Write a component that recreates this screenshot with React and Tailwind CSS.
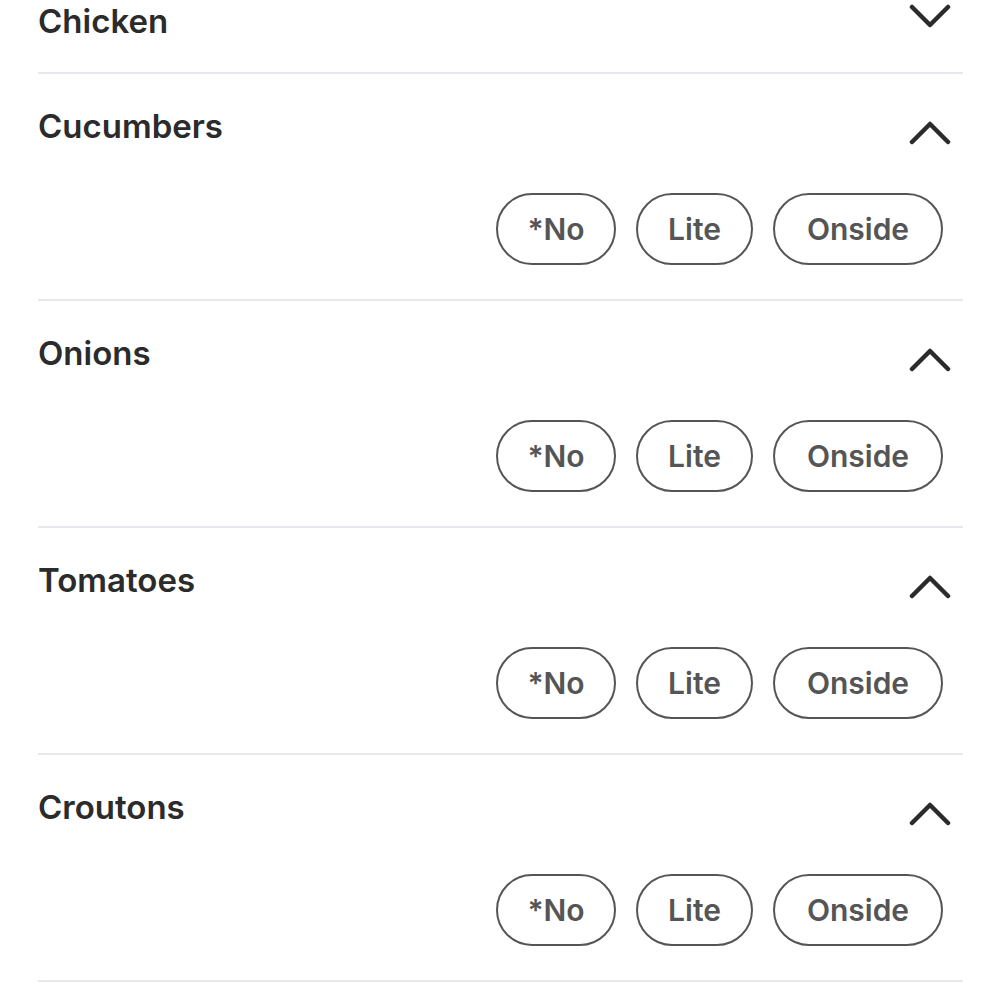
import React from 'react'

const sections = [
  { name: 'Chicken', open: false },
  { name: 'Cucumbers', open: true },
  { name: 'Onions', open: true },
  { name: 'Tomatoes', open: true },
  { name: 'Croutons', open: true },
]

const options = [
  { label: '*No', w: 'w-[120px]' },
  { label: 'Lite', w: 'w-[117px]' },
  { label: 'Onside', w: 'w-[170px]' },
]

function Chevron({ up }) {
  return (
    <svg width="42" height="24" viewBox="0 0 42 24" fill="none" className="text-[#2b2b2b]">
      <polyline
        points={up ? '3,21 21,3 39,21' : '3,3 21,21 39,3'}
        stroke="currentColor"
        strokeWidth="4.5"
        strokeLinecap="round"
        strokeLinejoin="round"
      />
    </svg>
  )
}

function Section({ name, open }) {
  if (!open) {
    return (
      <div className="flex items-start justify-between border-b-2 border-[#e6e8ee] pt-[3px] pb-[33px]">
        <h2 className="text-[33px] leading-[36px] font-semibold text-[#2b2b2b]">{name}</h2>
        <div className="mr-[12px] mt-[1px]">
          <Chevron up={false} />
        </div>
      </div>
    )
  }
  return (
    <div className="border-b-2 border-[#e6e8ee] pt-[34px] pb-[34px]">
      <div className="flex items-start justify-between">
        <h2 className="text-[33px] leading-[36px] font-semibold text-[#2b2b2b]">{name}</h2>
        <div className="mr-[12px] mt-[13px]">
          <Chevron up />
        </div>
      </div>
      <div className="mt-[48px] flex justify-end gap-[20px] pr-[20px]">
        {options.map((o) => (
          <button
            key={o.label}
            className={`${o.w} h-[72px] rounded-full border-2 border-[#555] text-[30px] font-semibold text-[#555] flex items-center justify-center`}
          >
            {o.label}
          </button>
        ))}
      </div>
    </div>
  )
}

export default function App() {
  return (
    <div className="min-h-screen bg-white px-[38px] pr-[37px] font-['Inter',sans-serif]">
      {sections.map((s) => (
        <Section key={s.name} {...s} />
      ))}
    </div>
  )
}
